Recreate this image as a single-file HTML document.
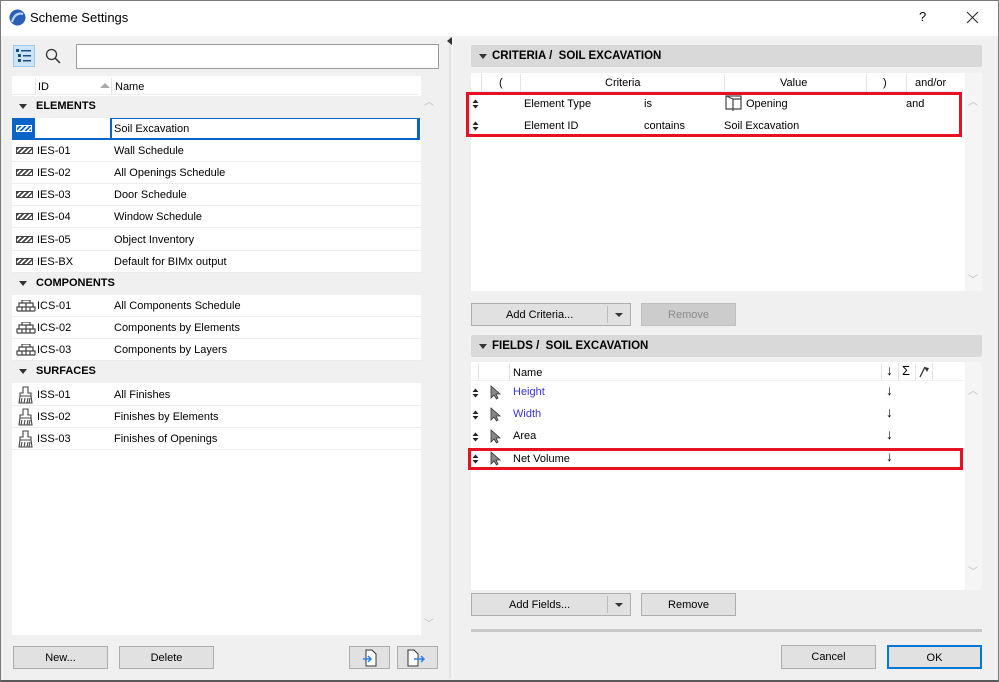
<!DOCTYPE html>
<html><head><meta charset="utf-8"><style>
*{box-sizing:border-box;margin:0;padding:0}
body{width:999px;height:682px;overflow:hidden;background:#f0f0f0;font-family:"Liberation Sans",sans-serif;font-size:11px;color:#000;position:relative}
.a{position:absolute}
.t{position:absolute;white-space:nowrap;line-height:14px}
.btn{position:absolute;background:#e1e1e1;border:1px solid #adadad;text-align:center;line-height:22px;font-size:11px}
.row{position:absolute;left:12px;width:409px;height:22px;border-bottom:1px solid #ececec;background:#fff}
.grp{position:absolute;left:12px;width:409px;height:22px;background:#f0f0f0;font-weight:bold}
.hat{position:absolute;left:4px;top:7px;width:17px;height:7px;background:repeating-linear-gradient(135deg,#444 0 1.5px,#fff 1.5px 3.5px);border:1px solid #444}
.arr{position:absolute;width:0;height:0;border-left:4px solid transparent;border-right:4px solid transparent;border-top:5px solid #333}
.sec{position:absolute;left:471px;width:511px;height:22px;background:#d9d9d9;border-radius:2px;font-weight:bold;font-size:11.5px}
.ud{position:absolute;width:7px;height:10px}
</style></head><body>
<svg width="0" height="0" style="position:absolute"><defs>
<g id="br"><path d="M1 11H19M1 11V7H19V11M3 7V3H17V7M6 3V0H14V3M6 7V11M10 3V7M14 7V11M10 7V11" stroke="#444" stroke-width="1.2" fill="none"/></g>
<g id="bs"><path d="M6 1H11V7H14V10H3V7H6Z M3 10L2 17H15L14 10 M5 12L4 17M8 12L7 17M11 12L10 17M13 12L12 17" stroke="#444" stroke-width="1.1" fill="none"/></g>
<path id="cur" d="M1 1V13L4 10L6.5 14L8 13L6 9H10Z" fill="#888" stroke="#333" stroke-width="0.8"/>
<g id="udg"><path d="M0.5 4L3.5 0.5L6.5 4Z M0.5 6L3.5 9.5L6.5 6Z" fill="#222"/></g>
</defs></svg>
<div class="a" style="left:0;top:0;width:999px;height:682px;border:1px solid #7a7a7a;border-bottom:2px solid #5a5a5a"></div>
<div class="a" style="left:1px;top:1px;width:997px;height:35px;background:#fff"></div>
<svg class="a" style="left:9px;top:9px" width="17" height="17"><circle cx="8.5" cy="8.5" r="8" fill="#2a5fb8"/><path d="M3 13 Q6 3 14 5" stroke="#bcd4ff" stroke-width="2.2" fill="none"/></svg>
<div class="t" style="left:30px;top:11px;font-size:13px">Scheme Settings</div>
<div class="t" style="left:919px;top:10px;font-size:13px">?</div>
<svg class="a" style="left:966px;top:11px" width="13" height="13"><path d="M1 1L12 12M12 1L1 12" stroke="#333" stroke-width="1.2"/></svg>

<div class="a" style="left:13px;top:45px;width:22px;height:22px;background:#cce4f7;border:1px solid #99c9ef"></div>
<svg class="a" style="left:16px;top:49px" width="16" height="14"><g fill="#1a4f8a"><rect x="0" y="0" width="3" height="3"/><rect x="5" y="1" width="10" height="1.5"/><rect x="2" y="5" width="3" height="3"/><rect x="7" y="6" width="8" height="1.5"/><rect x="2" y="10" width="3" height="3"/><rect x="7" y="11" width="8" height="1.5"/></g></svg>
<svg class="a" style="left:45px;top:48px" width="16" height="16"><circle cx="6.5" cy="6.5" r="5" stroke="#333" stroke-width="1.3" fill="none"/><path d="M10 10L15 15" stroke="#333" stroke-width="1.5"/></svg>
<div class="a" style="left:76px;top:44px;width:363px;height:25px;background:#fff;border:1px solid #9a9a9a"></div>

<div class="a" style="left:12px;top:76px;width:409px;height:559px;background:#fff"></div>
<div class="a" style="left:12px;top:77px;width:407px;height:18px;background:#fff;border-bottom:1px solid #eee"></div>
<div class="a" style="left:35px;top:78px;width:1px;height:17px;background:#e5e5e5"></div>
<div class="a" style="left:111px;top:78px;width:1px;height:17px;background:#e5e5e5"></div>
<div class="t" style="left:38px;top:80px">ID</div>
<div class="a" style="left:100px;top:83px;border-left:5px solid transparent;border-right:5px solid transparent;border-bottom:5px solid #aaa"></div>
<div class="t" style="left:115px;top:80px">Name</div>
<div class="a" style="left:421px;top:76px;width:18px;height:559px;background:#f0f0f0"></div>
<div class="t" style="left:424px;top:96px;color:#bbb;font-size:10px">︿</div>
<div class="t" style="left:424px;top:618px;color:#bbb;font-size:10px">﹀</div>

<div class="grp" style="top:96px"><div class="arr" style="left:7px;top:8px"></div><div class="t" style="left:24px;top:3px">ELEMENTS</div></div>
<div class="row" style="top:118px;background:#fff">
 <div class="a" style="left:0;top:0;width:23px;height:22px;background:#0a64c8"></div>
 <div class="a" style="left:4px;top:7px;width:16px;height:7px;background:repeating-linear-gradient(135deg,#fff 0 1.5px,#0a64c8 1.5px 3.5px);border:1px solid #fff"></div>
 <div class="a" style="left:98px;top:0;width:310px;height:22px;border:1px solid #0a64c8;border-left-width:2px;border-right-width:3px"></div>
 <div class="a" style="left:0;top:20px;width:408px;height:2px;background:#0a64c8"></div>
 <div class="t" style="left:102px;top:4px">Soil Excavation</div>
</div>
<div class="row" style="top:140px"><div class="hat"></div><div class="t" style="left:25px;top:4px">IES-01</div><div class="t" style="left:102px;top:4px">Wall Schedule</div></div>
<div class="row" style="top:162px"><div class="hat"></div><div class="t" style="left:25px;top:4px">IES-02</div><div class="t" style="left:102px;top:4px">All Openings Schedule</div></div>
<div class="row" style="top:184px"><div class="hat"></div><div class="t" style="left:25px;top:4px">IES-03</div><div class="t" style="left:102px;top:4px">Door Schedule</div></div>
<div class="row" style="top:206px"><div class="hat"></div><div class="t" style="left:25px;top:4px">IES-04</div><div class="t" style="left:102px;top:4px">Window Schedule</div></div>
<div class="row" style="top:229px"><div class="hat"></div><div class="t" style="left:25px;top:4px">IES-05</div><div class="t" style="left:102px;top:4px">Object Inventory</div></div>
<div class="row" style="top:251px"><div class="hat"></div><div class="t" style="left:25px;top:4px">IES-BX</div><div class="t" style="left:102px;top:4px">Default for BIMx output</div></div>
<div class="grp" style="top:273px"><div class="arr" style="left:7px;top:8px"></div><div class="t" style="left:24px;top:3px">COMPONENTS</div></div>
<div class="row" style="top:295px"><svg class="a" style="left:4px;top:5px" width="20" height="12"><use href="#br"/></svg><div class="t" style="left:25px;top:4px">ICS-01</div><div class="t" style="left:102px;top:4px">All Components Schedule</div></div>
<div class="row" style="top:317px"><svg class="a" style="left:4px;top:5px" width="20" height="12"><use href="#br"/></svg><div class="t" style="left:25px;top:4px">ICS-02</div><div class="t" style="left:102px;top:4px">Components by Elements</div></div>
<div class="row" style="top:339px"><svg class="a" style="left:4px;top:5px" width="20" height="12"><use href="#br"/></svg><div class="t" style="left:25px;top:4px">ICS-03</div><div class="t" style="left:102px;top:4px">Components by Layers</div></div>
<div class="grp" style="top:361px"><div class="arr" style="left:7px;top:8px"></div><div class="t" style="left:24px;top:3px">SURFACES</div></div>
<div class="row" style="top:384px"><svg class="a" style="left:5px;top:2px" width="17" height="18"><use href="#bs"/></svg><div class="t" style="left:25px;top:4px">ISS-01</div><div class="t" style="left:102px;top:4px">All Finishes</div></div>
<div class="row" style="top:406px"><svg class="a" style="left:5px;top:2px" width="17" height="18"><use href="#bs"/></svg><div class="t" style="left:25px;top:4px">ISS-02</div><div class="t" style="left:102px;top:4px">Finishes by Elements</div></div>
<div class="row" style="top:428px"><svg class="a" style="left:5px;top:2px" width="17" height="18"><use href="#bs"/></svg><div class="t" style="left:25px;top:4px">ISS-03</div><div class="t" style="left:102px;top:4px">Finishes of Openings</div></div>

<div class="btn" style="left:13px;top:646px;width:95px;height:23px">New...</div>
<div class="btn" style="left:119px;top:646px;width:95px;height:23px">Delete</div>
<div class="btn" style="left:349px;top:646px;width:41px;height:23px"></div>
<svg class="a" style="left:362px;top:649px" width="16" height="18"><path d="M4 1H10L14 5V17H4Z" stroke="#333" fill="#fff"/><path d="M1 10H9M6 7L9 10L6 13" stroke="#2b7de9" stroke-width="1.5" fill="none"/></svg>
<div class="btn" style="left:397px;top:646px;width:41px;height:23px"></div>
<svg class="a" style="left:407px;top:649px" width="20" height="18"><path d="M1 1H7L11 5V17H1Z" stroke="#333" fill="#fff"/><path d="M7 10H17M14 7L17 10L14 13" stroke="#2b7de9" stroke-width="1.5" fill="none"/></svg>

<div class="a" style="left:449px;top:36px;width:2px;height:643px;background:#e2e2e2"></div>
<div class="a" style="left:452px;top:36px;width:1px;height:643px;background:#fafafa"></div>
<div class="a" style="left:447px;top:37px;border-top:4px solid transparent;border-bottom:4px solid transparent;border-right:5px solid #333"></div>

<div class="sec" style="top:45px"><div class="arr" style="left:8px;top:9px"></div><div class="t" style="left:21px;top:4px">CRITERIA /&nbsp; SOIL EXCAVATION</div></div>
<div class="a" style="left:471px;top:73px;width:494px;height:218px;background:#fff"></div>
<div class="a" style="left:965px;top:73px;width:17px;height:218px;background:#f5f5f5"></div>
<div class="t" style="left:968px;top:96px;color:#bbb;font-size:10px">︿</div>
<div class="t" style="left:968px;top:274px;color:#bbb;font-size:10px">﹀</div>
<div class="a" style="left:471px;top:74px;width:494px;height:18px;border-bottom:1px solid #eee"></div>
<div class="a" style="left:481px;top:74px;width:1px;height:18px;background:#e5e5e5"></div>
<div class="a" style="left:520px;top:74px;width:1px;height:18px;background:#e5e5e5"></div>
<div class="a" style="left:724px;top:74px;width:1px;height:18px;background:#e5e5e5"></div>
<div class="a" style="left:866px;top:74px;width:1px;height:18px;background:#e5e5e5"></div>
<div class="a" style="left:906px;top:74px;width:1px;height:18px;background:#e5e5e5"></div>
<div class="t" style="left:499px;top:76px">(</div>
<div class="t" style="left:605px;top:76px">Criteria</div>
<div class="t" style="left:780px;top:76px">Value</div>
<div class="t" style="left:883px;top:76px">)</div>
<div class="t" style="left:915px;top:76px">and/or</div>
<div class="a" style="left:466px;top:92px;width:496px;height:45px;border:3px solid #e81123"></div>
<svg class="ud" style="left:472px;top:99px"><use href="#udg"/></svg>
<svg class="ud" style="left:472px;top:121px"><use href="#udg"/></svg>
<div class="t" style="left:524px;top:97px">Element Type</div>
<div class="t" style="left:644px;top:97px">is</div>
<svg class="a" style="left:725px;top:95px" width="18" height="16"><path d="M1 1H16V14H1Z M1 1L8 4V16 M8 4H16" stroke="#444" stroke-width="1.2" fill="none"/></svg>
<div class="t" style="left:746px;top:97px">Opening</div>
<div class="t" style="left:906px;top:97px">and</div>
<div class="t" style="left:524px;top:119px">Element ID</div>
<div class="t" style="left:644px;top:119px">contains</div>
<div class="t" style="left:724px;top:119px">Soil Excavation</div>

<div class="btn" style="left:471px;top:303px;width:160px;height:23px;text-align:left;padding-left:34px">Add Criteria...</div>
<div class="a" style="left:607px;top:306px;width:1px;height:17px;background:#bbb"></div>
<div class="a" style="left:615px;top:313px;border-left:4px solid transparent;border-right:4px solid transparent;border-top:4px solid #333"></div>
<div class="btn" style="left:641px;top:303px;width:95px;height:23px;background:#cccccc;border-color:#bfbfbf;color:#8a8a8a">Remove</div>

<div class="sec" style="top:335px"><div class="arr" style="left:8px;top:9px"></div><div class="t" style="left:21px;top:4px">FIELDS /&nbsp; SOIL EXCAVATION</div></div>
<div class="a" style="left:471px;top:362px;width:494px;height:228px;background:#fff"></div>
<div class="a" style="left:965px;top:362px;width:17px;height:228px;background:#f5f5f5"></div>
<div class="t" style="left:968px;top:385px;color:#bbb;font-size:10px">︿</div>
<div class="t" style="left:968px;top:566px;color:#bbb;font-size:10px">﹀</div>
<div class="a" style="left:471px;top:363px;width:492px;height:18px;border-bottom:1px solid #f3f3f3"></div>
<div class="a" style="left:478px;top:363px;width:1px;height:18px;background:#e5e5e5"></div>
<div class="a" style="left:509px;top:363px;width:1px;height:18px;background:#e5e5e5"></div>
<div class="a" style="left:881px;top:363px;width:1px;height:18px;background:#e5e5e5"></div>
<div class="a" style="left:898px;top:363px;width:1px;height:18px;background:#e5e5e5"></div>
<div class="a" style="left:915px;top:363px;width:1px;height:18px;background:#e5e5e5"></div>
<div class="a" style="left:932px;top:363px;width:1px;height:18px;background:#e5e5e5"></div>
<div class="t" style="left:513px;top:366px">Name</div>
<div class="t" style="left:886px;top:363px;font-size:14px">↓</div>
<div class="t" style="left:902px;top:364px;font-size:13px">Σ</div>
<svg class="a" style="left:918px;top:365px" width="13" height="13"><path d="M2 12L7 2" stroke="#333" stroke-width="1.3"/><path d="M6 2L11 3L9 7Z" fill="#333"/></svg>
<svg class="ud" style="left:472px;top:388px"><use href="#udg"/></svg>
<svg class="a" style="left:490px;top:385px" width="12" height="15"><use href="#cur"/></svg>
<div class="t" style="left:513px;top:385px;color:#3a35d0">Height</div>
<div class="t" style="left:886px;top:383px;font-size:14px">↓</div>
<svg class="ud" style="left:472px;top:410px"><use href="#udg"/></svg>
<svg class="a" style="left:490px;top:407px" width="12" height="15"><use href="#cur"/></svg>
<div class="t" style="left:513px;top:407px;color:#3a35d0">Width</div>
<div class="t" style="left:886px;top:405px;font-size:14px">↓</div>
<svg class="ud" style="left:472px;top:432px"><use href="#udg"/></svg>
<svg class="a" style="left:490px;top:429px" width="12" height="15"><use href="#cur"/></svg>
<div class="t" style="left:513px;top:429px">Area</div>
<div class="t" style="left:886px;top:427px;font-size:14px">↓</div>
<div class="a" style="left:468px;top:448px;width:495px;height:22px;border:3px solid #e81123"></div>
<svg class="ud" style="left:472px;top:454px"><use href="#udg"/></svg>
<svg class="a" style="left:490px;top:451px" width="12" height="15"><use href="#cur"/></svg>
<div class="t" style="left:513px;top:452px">Net Volume</div>
<div class="t" style="left:886px;top:449px;font-size:14px">↓</div>

<div class="btn" style="left:471px;top:593px;width:160px;height:23px;text-align:left;padding-left:37px">Add Fields...</div>
<div class="a" style="left:607px;top:596px;width:1px;height:17px;background:#bbb"></div>
<div class="a" style="left:615px;top:603px;border-left:4px solid transparent;border-right:4px solid transparent;border-top:4px solid #333"></div>
<div class="btn" style="left:641px;top:593px;width:95px;height:23px">Remove</div>

<div class="a" style="left:471px;top:629px;width:511px;height:3px;background:#c8c8c8"></div>
<div class="btn" style="left:781px;top:645px;width:95px;height:24px">Cancel</div>
<div class="btn" style="left:887px;top:645px;width:95px;height:24px;border:2px solid #0078d7">OK</div>
</body></html>
